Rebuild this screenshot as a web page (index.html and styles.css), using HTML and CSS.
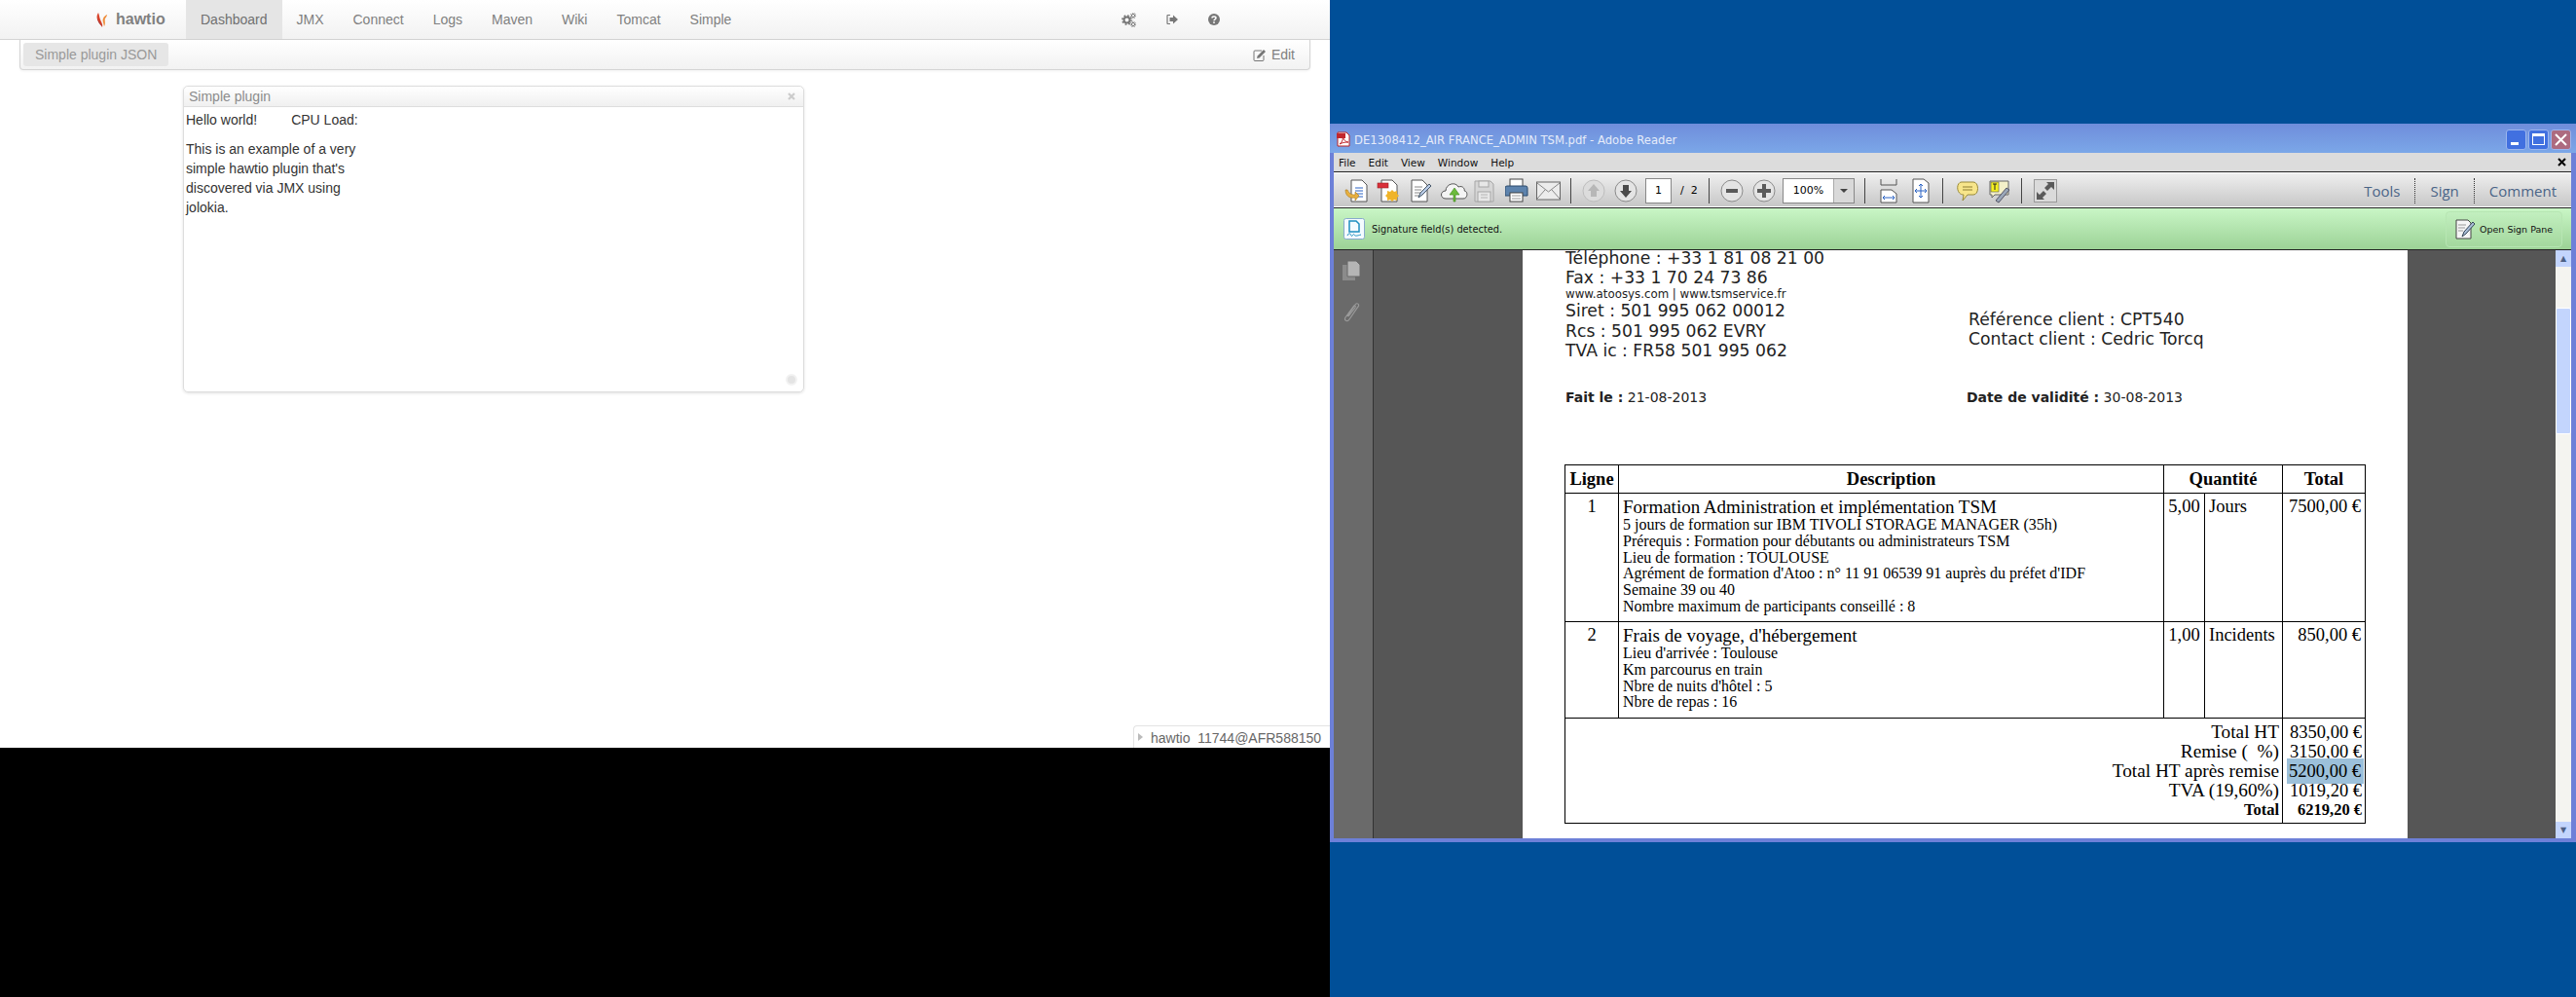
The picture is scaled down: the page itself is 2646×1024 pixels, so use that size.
FILE: index.html
```html
<!DOCTYPE html>
<html lang="en">
<head>
    <meta charset="UTF-8">
    <title>hawtio and Adobe Reader</title>
    <link rel="stylesheet" href="styles.css">
</head>
<body>
<div class="screen">
    <!-- browser with hawtio -->
    <div class="browser">
        <div class="app">
            <nav class="navbar">
                <a class="brand">
                    <svg width="12" height="15" viewBox="0 0 12 15"><path d="M2 0C0 3 0 6 2 9L6 15C7 12 5 10 4 7 3 5 3 2 2 0Z" fill="#d9442b"/><path d="M11 2C7 4 6 7 7 10L8 14C10 11 8 8 9 6 10 5 11 3 11 2Z" fill="#ef8e3c"/><path d="M1 5C1 9 3 12 6 14 5 11 2 9 1 5Z" fill="#a33"/></svg>
                    <span>hawtio</span>
                </a>
                <a class="tab active">Dashboard</a>
                <a class="tab">JMX</a>
                <a class="tab">Connect</a>
                <a class="tab">Logs</a>
                <a class="tab">Maven</a>
                <a class="tab">Wiki</a>
                <a class="tab">Tomcat</a>
                <a class="tab">Simple</a>
                <div class="nav-icons">
                    <svg width="15" height="15" viewBox="0 0 15 15" fill="none" stroke="#777"><circle cx="5.5" cy="7.5" r="3" stroke-width="2"/><circle cx="5.5" cy="7.5" r="4.6" stroke-width="1.6" stroke-dasharray="1.8 1.8"/><circle cx="12" cy="3" r="1.6"/><circle cx="12" cy="3" r="2.8" stroke-dasharray="1.2 1.2"/><circle cx="12" cy="12" r="1.6"/><circle cx="12" cy="12" r="2.8" stroke-dasharray="1.2 1.2"/></svg>
                    <svg width="12" height="12" viewBox="0 0 12 12"><path d="M4 1.5H1.5A.5.5 0 0 0 1 2v8a.5.5 0 0 0 .5.5H4" fill="none" stroke="#777" stroke-width="1.2"/><path d="M3.5 4H7V1.5L12 6 7 10.500V8H3.5Z" fill="#777"/></svg>
                    <svg width="12" height="12" viewBox="0 0 12 12"><circle cx="6" cy="6" r="6" fill="#777"/><path d="M4 4.600C4 2.600 8 2.600 8 4.600 8 6 6 5.800 6 7.300" fill="none" stroke="#fff" stroke-width="1.500"/><rect x="5.200" y="8.300" width="1.600" height="1.600" fill="#fff"/></svg>
                </div>
            </nav>
            <div class="subbar">
                <a class="sub-btn">Simple plugin JSON</a>
                <a class="edit">
                    <svg width="14" height="13" viewBox="0 0 14 13"><path d="M9 2H2a1 1 0 0 0-1 1v8.500a1 1 0 0 0 1 1h8a1 1 0 0 0 1-1V7" fill="none" stroke="#777"/><path d="M4 10l.6-2.600L11 1l2 2-6.400 6.400Z" fill="#777"/></svg>
                    Edit
                </a>
            </div>
            <section class="widget">
                <header class="widget-title">
                    <span>Simple plugin</span>
                    <svg width="8" height="8" viewBox="0 0 8 8"><path d="M1 1l6 6M7 1L1 7" stroke="#ccc" stroke-width="2.200"/></svg>
                </header>
                <div class="widget-body">
                    <div class="hello"><span>Hello world!</span><span>CPU Load:</span></div>
                    <p class="about">This is an example of a very simple hawtio plugin that's discovered via JMX using jolokia.</p>
                </div>
                <i class="resize"></i>
            </section>
            <div class="jvm-tag"><i class="caret"></i>hawtio&nbsp; 11744@AFR588150</div>
        </div>
        <div class="black"></div>
    </div>

    <!-- desktop with reader window -->
    <div class="desktop">
        <div class="window">
            <div class="titlebar">
                <svg width="16" height="16" viewBox="0 0 16 16"><path d="M2 1h9l3 3v11H2Z" fill="#fff" stroke="#b22"/><rect x="1" y="2" width="9" height="5" fill="#c1272d"/><path d="M4 13C7 11 8 7 7 5 8 8 10 11 13 11 9 11 7 11.500 4 13Z" fill="none" stroke="#c1272d"/></svg>
                <span class="win-title">DE1308412_AIR FRANCE_ADMIN TSM.pdf - Adobe Reader</span>
                <div class="win-btns">
                    <b class="win-btn"><i class="glyph-min"></i></b>
                    <b class="win-btn"><i class="glyph-max"></i></b>
                    <b class="win-btn close"><svg width="13" height="13" viewBox="0 0 13 13"><path d="M1 1l11 11M12 1L1 12" stroke="#fff" stroke-width="2"/></svg></b>
                </div>
            </div>
            <div class="menubar">
                <span>File</span><span>Edit</span><span>View</span><span>Window</span><span>Help</span>
                <svg class="menu-x" width="9" height="9" viewBox="0 0 9 9"><path d="M1 1l7 7M8 1L1 8" stroke="#000" stroke-width="2"/></svg>
            </div>
            <div class="toolbar">
                <svg width="33" height="26" viewBox="0 0 33 26"><path d="M7 2h11l5 5v17H7Z" fill="#fff" stroke="#555"/><path d="M11 10h8M11 13h8M11 16h8M13 19h6" stroke="#2b63c4"/><path d="M1 12C1 18 5 21 11 20V23L15 18 11 14V17C7 17 5 16 3 12Z" fill="#e8b040" stroke="#a97a1c" stroke-width=".6"/></svg>
                <svg width="35" height="26" viewBox="0 0 35 26"><path d="M5 2h11l5 5v17H5Z" fill="#fff" stroke="#555"/><rect x="1" y="5" width="11" height="5" fill="#d9303a" stroke="#922" stroke-width=".6"/><path d="M16 12l2 2 3-1 0 3 2 2-2 2 0 3-3-1-2 2-2-2-3 1 0-3-2-2 2-2 0-3 3 1Z" fill="#f0b429"/></svg>
                <svg width="30" height="26" viewBox="0 0 30 26"><path d="M1 2h11l5 5v17H1Z" fill="#fff" stroke="#555"/><path d="M4 9h8M4 12h7M4 15h6M4 18h5" stroke="#888"/><path d="M8 20l2-5L19 6l2 2-9 9Z" fill="#b9cbe6" stroke="#456"/></svg>
                <svg width="35" height="26" viewBox="0 0 35 26"><path d="M6 21C0 21 0 13 6 13 6 6 16 3 19 9 24 7 26 12 25 13 29 13 29 21 24 21Z" fill="#f4f4f4" stroke="#555"/><path d="M14 24V17H10L15 10 20 17H16V24Z" fill="#6cbb3c" stroke="#3f8a1c" stroke-width=".6"/></svg>
                <svg width="32" height="26" viewBox="0 0 32 26"><path d="M1 3h16l3 3v18H1Z" fill="#d6d6d6" stroke="#a5a5a5"/><rect x="5" y="3" width="10" height="6" fill="#e7e7e7" stroke="#a5a5a5"/><rect x="4" y="14" width="13" height="10" fill="#e7e7e7" stroke="#a5a5a5"/><path d="M7 17h7M7 20h7" stroke="#b5b5b5"/></svg>
                <svg width="32" height="26" viewBox="0 0 32 26"><rect x="5" y="1" width="13" height="8" fill="#fff" stroke="#444"/><path d="M2 8h19a2 2 0 0 1 2 2v8H0v-8a2 2 0 0 1 2-2Z" fill="#5d83ad" stroke="#2c4b6d"/><rect x="5" y="15" width="13" height="9" fill="#fff" stroke="#444"/><path d="M7 18h9M7 21h9" stroke="#999"/></svg>
                <svg width="35" height="26" viewBox="0 0 35 26"><rect x=".5" y="4" width="24" height="18" fill="#ececec" stroke="#666"/><path d="M1 5l11.500 9L24 5M1 21l8-9M24 21l-8-9" fill="none" stroke="#888"/></svg>
                <i class="tb-sep"></i>
                <svg width="33" height="26" viewBox="0 0 33 26"><circle cx="12" cy="13" r="11" fill="#dcdcdc" stroke="#bdbdbd"/><path d="M12 6L18 13H15V19H9V13H6Z" fill="#b7b7b7"/></svg>
                <svg width="32" height="26" viewBox="0 0 32 26"><circle cx="12" cy="13" r="11" fill="#e4e4e4" stroke="#8b8b8b"/><path d="M12 20L6 13H9V7H15V13H18Z" fill="#4a4a4a"/></svg>
                <span class="page-box">1</span>
                <span class="page-of">/&nbsp; 2</span>
                <i class="tb-sep"></i>
                <svg width="33" height="26" viewBox="0 0 33 26"><circle cx="12" cy="13" r="11" fill="#e4e4e4" stroke="#8b8b8b"/><rect x="6" y="11" width="12" height="4" fill="#5a5a5a"/></svg>
                <svg width="31" height="26" viewBox="0 0 31 26"><circle cx="12" cy="13" r="11" fill="#e4e4e4" stroke="#8b8b8b"/><path d="M10 6h4v5h5v4h-5v5h-4v-5H5v-4h5Z" fill="#5a5a5a"/></svg>
                <div class="zoom-box"><span>100%</span><i class="zoom-arrow"></i></div>
                <i class="tb-sep sep-fit"></i>
                <svg width="33" height="26" viewBox="0 0 33 26"><path d="M1 1v6h16V1" fill="none" stroke="#555"/><path d="M1 12h11l5 4v9H1Z" fill="#fff" stroke="#555"/><path d="M3 20h12M3 20l2-2M3 20l2 2M15 20l-2-2M15 20l-2 2" stroke="#2b63c4"/></svg>
                <svg width="31" height="26" viewBox="0 0 31 26"><path d="M1 1h11l5 4v20H1Z" fill="#fff" stroke="#555"/><path d="M9 6v14M3 13h12M9 6L7 8M9 6l2 2M9 20l-2-2M9 20l2-2M3 13l2-2M3 13l2 2M15 13l-2-2M15 13l-2 2" stroke="#2b63c4"/></svg>
                <i class="tb-sep sep-note"></i>
                <svg width="33" height="26" viewBox="0 0 33 26"><path d="M5 4h12c6 0 6 13 0 13h-6l-5 6 1-6C-1 17-1 4 5 4Z" fill="#f7e58a" stroke="#998a3a"/><path d="M6 9h10M6 12h10" stroke="#8e7f33"/></svg>
                <svg width="33" height="26" viewBox="0 0 33 26"><path d="M1 3h19v14H6l-3 3v-3H1Z" fill="#f4f0c9" stroke="#666"/><rect x="2" y="4" width="8" height="10" fill="#f5ef20" stroke="#555" stroke-width=".6"/><path d="M4 6h4M6 6v6" stroke="#222"/><path d="M7 23L18 10l3 2-11 13Z" fill="#9aa7b8" stroke="#556"/></svg>
                <i class="tb-sep sep-expand"></i>
                <svg width="24" height="24" viewBox="0 0 24 24"><rect x=".5" y=".5" width="23" height="23" fill="#dadada" stroke="#9a9a9a"/><path d="M13 3h8v8l-3-3-4 4-3-3 4-4ZM11 21H3v-8l3 3 4-4 3 3-4 4Z" fill="#5a5a5a"/></svg>
                <div class="panes"><span>Tools</span><span>Sign</span><span>Comment</span></div>
            </div>
            <div class="notice">
                <svg width="22" height="22" viewBox="0 0 22 22"><rect x=".5" y=".5" width="21" height="21" rx="2" fill="#f4fbff" stroke="#8ac"/><path d="M6 3h7l3 3v8H6Z" fill="none" stroke="#1e8fc0" stroke-width="1.500"/><path d="M4 18c2-4 3-2 4 0s2-3 3-1 3 1 7 0" fill="none" stroke="#1e8fc0"/></svg>
                <span class="notice-text">Signature field(s) detected.</span>
                <a class="sign-pane">
                    <svg width="21" height="21" viewBox="0 0 21 21"><path d="M1 1h12l3 3v16H1Z" fill="#f6f6f6" stroke="#444"/><path d="M3 6h8M3 9h7M3 12h5" stroke="#999"/><path d="M7 18l2-5 9-10 2 2-9 10Z" fill="#a9bdd8" stroke="#345"/></svg>
                    Open Sign Pane
                </a>
            </div>
            <div class="viewer">
                <aside class="nav-pane">
                    <svg width="20" height="22" viewBox="0 0 20 22"><rect x="1" y="5" width="13" height="16" fill="#8b8b8b"/><path d="M6 1h9l4 4v12H6Z" fill="#b5b5b5" stroke="#686868"/></svg>
                    <svg width="18" height="22" viewBox="0 0 18 22" fill="none" stroke="#9a9a9a" stroke-width="1.200"><path d="M5 15L13 3c2-3 5 0 3 2L7 18c-2 3-6 1-4-2L11 5c1-2 3-1 2 1L6 15"/></svg>
                </aside>
                <div class="doc-area">
                    <div class="page">
                        <div class="top-info">
                            <div class="company">
                                <div class="ln first">Téléphone : +33 1 81 08 21 00</div>
                                <div class="ln">Fax : +33 1 70 24 73 86</div>
                                <div class="ln web">www.atoosys.com | www.tsmservice.fr</div>
                                <div class="ln">Siret : 501 995 062 00012</div>
                                <div class="ln rcs">Rcs : 501 995 062 EVRY</div>
                                <div class="ln">TVA ic : FR58 501 995 062</div>
                            </div>
                            <div class="client">
                                <div class="ln">Référence client : CPT540</div>
                                <div class="ln">Contact client : Cedric Torcq</div>
                            </div>
                        </div>
                        <div class="dates">
                            <span class="date-l"><b>Fait le :</b> 21-08-2013</span>
                            <span><b>Date de validité :</b> 30-08-2013</span>
                        </div>
                        <table class="quote">
                            <colgroup><col class="c1"><col class="c2"><col class="c3"><col class="c4"><col class="c5"></colgroup>
                            <tr class="head"><th>Ligne</th><th>Description</th><th colspan="2">Quantité</th><th>Total</th></tr>
                            <tr class="row-a">
                                <td class="mid">1</td>
                                <td><div class="item">Formation Administration et implémentation TSM</div>
                                    <div class="sub">5 jours de formation sur IBM TIVOLI STORAGE MANAGER (35h)</div>
                                    <div class="sub">Prérequis : Formation pour débutants ou administrateurs TSM</div>
                                    <div class="sub">Lieu de formation : TOULOUSE</div>
                                    <div class="sub">Agrément de formation d'Atoo : n° 11 91 06539 91 auprès du préfet d'IDF</div>
                                    <div class="sub">Semaine 39 ou 40</div>
                                    <div class="sub">Nombre maximum de participants conseillé : 8</div></td>
                                <td class="mid">5,00</td><td>Jours</td><td class="num">7500,00 €</td>
                            </tr>
                            <tr class="row-b">
                                <td class="mid">2</td>
                                <td><div class="item">Frais de voyage, d'hébergement</div>
                                    <div class="sub">Lieu d'arrivée : Toulouse</div>
                                    <div class="sub">Km parcourus en train</div>
                                    <div class="sub">Nbre de nuits d'hôtel : 5</div>
                                    <div class="sub">Nbre de repas : 16</div></td>
                                <td class="mid">1,00</td><td>Incidents</td><td class="num">850,00 €</td>
                            </tr>
                            <tr class="row-sum">
                                <td colspan="4" class="num sum labels">
                                    <div>Total HT</div><div>Remise (&nbsp; %)</div><div>Total HT après remise</div><div>TVA (19,60%)</div><div class="grand">Total</div>
                                </td>
                                <td class="num sum">
                                    <div>8350,00 €</div><div>3150,00 €</div><div><span class="hl">5200,00 €</span></div><div>1019,20 €</div><div class="grand">6219,20 €</div>
                                </td>
                            </tr>
                        </table>
                    </div>
                </div>
                <div class="scrollbar">
                    <i class="sb-btn">▲</i>
                    <i class="sb-gap"></i>
                    <i class="sb-thumb"></i>
                    <i class="sb-rest"></i>
                    <i class="sb-btn">▼</i>
                </div>
            </div>
        </div>
    </div>
</div>
</body>
</html>
```

FILE: styles.css
```css
*{
    margin: 0;
    padding: 0;
    box-sizing: border-box;
}
body{
    width: 2646px;
    height: 1024px;
    overflow: hidden;
    background: #004f98;
    font-family: "Liberation Sans", sans-serif;
}
.screen{
    display: flex;
    height: 1024px;
}
.browser{
    width: 1366px;
    display: flex;
    flex-direction: column;
}
.app{
    position: relative;
    height: 768px;
    background: #fff;
    font-size: 14px;
    line-height: 20px;
}
.black{
    flex: 1;
    background: #000;
}

/* hawtio nav */
.navbar{
    display: flex;
    height: 41px;
    padding-left: 99px;
    background: linear-gradient(#fff, #f2f2f2);
    border-bottom: 1px solid #d4d4d4;
    color: #808080;
}
.brand{
    display: flex;
    align-items: center;
    gap: 8px;
    width: 92px;
    font-size: 16px;
    font-weight: bold;
}
.tab{
    padding: 10px 15px;
}
.tab.active{
    background: #e5e5e5;
    color: #707070;
}
.nav-icons{
    display: flex;
    align-items: center;
    gap: 31px;
    margin-left: auto;
    margin-right: 113px;
}
.subbar{
    display: flex;
    justify-content: space-between;
    align-items: center;
    height: 31px;
    margin: 0 20px;
    padding: 0 15px 0 4px;
    background: linear-gradient(#fff, #f2f2f2);
    border: 1px solid #d4d4d4;
    border-top: 0;
    border-radius: 0 0 4px 4px;
    box-shadow: 0 1px 3px rgba(0,0,0,.06);
    color: #808080;
}
.sub-btn{
    padding: 2px 12px;
    background: #e6e6e6;
    border-radius: 3px;
    color: #999;
    line-height: 20px;
    margin-left: -1px;
}
.edit{
    display: flex;
    align-items: center;
    gap: 5px;
}

/* widget */
.widget{
    position: relative;
    display: flex;
    flex-direction: column;
    width: 638px;
    height: 315px;
    margin: 16px 0 0 188px;
    border: 1px solid #ddd;
    border-radius: 5px;
    box-shadow: 0 1px 3px rgba(0,0,0,.12);
}
.widget-title{
    display: flex;
    justify-content: space-between;
    align-items: center;
    height: 21px;
    padding: 0 8px 0 5px;
    background: linear-gradient(#fff, #f0f0f0);
    border-bottom: 1px solid #ddd;
    border-radius: 5px 5px 0 0;
    color: #8c8c8c;
}
.widget-body{
    padding: 3px 0 0 2px;
    color: #333;
}
.hello{
    display: flex;
    gap: 35px;
}
.about{
    width: 180px;
    margin-top: 10px;
}
.resize{
    position: absolute;
    right: 6px;
    bottom: 6px;
    width: 12px;
    height: 12px;
    background: #e4e4e4;
    border: 2px solid #f2f2f2;
    border-radius: 50%;
}
.jvm-tag{
    position: absolute;
    right: 0;
    bottom: 0;
    width: 202px;
    height: 23px;
    padding: 2px 0 0 17px;
    background: #fff;
    border: 1px solid #e3e3e3;
    border-width: 1px 0 0 1px;
    border-radius: 4px 0 0 0;
    color: #666;
}
.caret{
    position: absolute;
    left: 4px;
    top: 7px;
    border-left: 5px solid #bbb;
    border-top: 4px solid transparent;
    border-bottom: 4px solid transparent;
}

/* reader window */
.desktop{
    flex: 1;
    padding-top: 127px;
}
.window{
    display: flex;
    flex-direction: column;
    height: 738px;
    padding: 0 5px 4px 4px;
    background: #6d80d8;
    box-shadow: inset 0 1px 0 #2a62b8;
    font-family: "DejaVu Sans", sans-serif;
}
.titlebar{
    display: flex;
    align-items: center;
    height: 30px;
    margin: 0 -5px 0 -4px;
    padding: 2px 5px 0 6px;
    background: linear-gradient(#6f8ddb, #7ba7e8);
    color: #e6ecfa;
}
.win-title{
    margin-left: 3px;
    padding-top: 2px;
    font-size: 11.600px;
}
.win-btns{
    display: flex;
    gap: 2px;
    margin-left: auto;
}
.win-btn{
    display: flex;
    align-items: center;
    justify-content: center;
    width: 21px;
    height: 21px;
    background: #4170e0;
    border: 1px solid #9cb6ee;
    border-radius: 3px;
}
.win-btn.close{
    background: #ad6b80;
}
.glyph-min{
    width: 8px;
    height: 3px;
    margin-top: 9px;
    margin-right: 4px;
    background: #fff;
}
.glyph-max{
    width: 13px;
    height: 12px;
    border: 1px solid #fff;
    border-top-width: 3px;
}
.menubar{
    display: flex;
    align-items: center;
    gap: 13px;
    height: 19px;
    padding-left: 5px;
    background: #dcdcdc;
    color: #111;
    font-size: 10.500px;
}
.menu-x{
    margin-left: auto;
    margin-right: 5px;
}
.toolbar{
    display: flex;
    align-items: center;
    height: 38px;
    padding: 1px 0 0 11px;
    background: linear-gradient(#f0f0f0, #c6c6c6);
    border-top: 1px solid #222;
    border-bottom: 1px solid #222;
    box-shadow: inset 0 -1px 0 #fff, inset 0 1px 0 #fff;
}
.toolbar svg{
    flex: none;
}
.tb-sep{
    flex: none;
    width: 1px;
    height: 26px;
    margin-right: 11px;
    background: #444;
}
.sep-fit{
    margin-left: 10px;
    margin-right: 15px;
}
.sep-note{
    margin-right: 14px;
}
.sep-expand{
    margin-right: 12px;
}
.page-box{
    width: 27px;
    height: 26px;
    margin-right: 9px;
    background: #fff;
    border: 1px solid #888;
    font-size: 11px;
    line-height: 24px;
    text-align: center;
}
.page-of{
    width: 29px;
    font-size: 11px;
}
.zoom-box{
    display: flex;
    width: 74px;
    height: 26px;
    background: #fff;
    border: 1px solid #888;
    font-size: 11px;
    line-height: 24px;
}
.zoom-box span{
    width: 51px;
    text-align: center;
}
.zoom-arrow{
    position: relative;
    flex: 1;
    background: #d9d9d9;
    border-left: 1px solid #aaa;
}
.zoom-arrow::after{
    content: "";
    position: absolute;
    left: 6px;
    top: 10px;
    border-top: 4px solid #444;
    border-left: 4px solid transparent;
    border-right: 4px solid transparent;
}
.panes{
    display: flex;
    margin-left: auto;
    font-family: "Open Sans", sans-serif;
    font-size: 15px;
    color: #4a6487;
}
.panes span{
    padding: 0 15px;
    line-height: 26px;
    border-left: 1px dotted #333;
}
.panes span:first-child{
    border-left: 0;
}
.notice{
    display: flex;
    align-items: center;
    height: 43px;
    padding-left: 10px;
    background: linear-gradient(#c9f6c6, #9cd296);
    border-bottom: 1px solid #222;
    color: #111;
    font-size: 9.800px;
}
.notice-text{
    margin-left: 7px;
}
.sign-pane{
    display: flex;
    align-items: center;
    gap: 4px;
    width: 120px;
    height: 37px;
    margin-left: auto;
    margin-right: 9px;
    padding-left: 9px;
    background: linear-gradient(#c2efbf, #a4d89e);
    border: 1px solid #b7e6b3;
    border-radius: 4px;
    font-size: 9.500px;
}
.viewer{
    flex: 1;
    display: flex;
    min-height: 0;
}
.nav-pane{
    display: flex;
    flex-direction: column;
    align-items: center;
    gap: 21px;
    width: 41px;
    padding: 10px 4px 0 0;
    background: #6a6a6a;
    border-right: 1px solid #333;
}
.doc-area{
    flex: 1;
    min-width: 0;
    padding: 0 152px 0 153px;
    background: #565656;
}
.page{
    height: 100%;
    padding: 0 42px 0 44px;
    background: #fff;
    color: #222;
}
.top-info{
    display: flex;
    font-size: 17.200px;
}
.company{
    width: 414px;
}
.ln{
    height: 20px;
    line-height: 20px;
}
.ln.first{
    height: 18px;
    line-height: 16px;
}
.web{
    height: 14px;
    line-height: 14px;
    font-size: 11.800px;
}
.rcs{
    height: 21px;
    line-height: 22px;
}
.client{
    padding-top: 61px;
}
.dates{
    display: flex;
    height: 16px;
    margin-top: 30px;
    font-size: 14px;
    line-height: 16px;
}
.date-l{
    width: 412px;
}
.quote{
    width: 822px;
    margin: 61px 0 0 -1px;
    border-collapse: collapse;
    table-layout: fixed;
    font-family: "Liberation Serif", serif;
    font-size: 18.500px;
    color: #000;
}
.c1{ width: 55px; }
.c2{ width: 560px; }
.c3{ width: 42px; }
.c4{ width: 80px; }
.c5{ width: 85px; }
.quote th, .quote td{
    border: 1px solid #000;
    padding: 0 4px;
    vertical-align: top;
}
.quote th{
    vertical-align: middle;
}
.head{ height: 29px; }
.row-a{ height: 132px; }
.row-b{ height: 99px; }
.row-sum{ height: 108px; }
.row-a td, .row-b td{
    padding-top: 5px;
    line-height: 17px;
}
.mid{
    text-align: center;
}
.num{
    text-align: right;
}
.item{
    height: 19px;
    font-size: 19px;
}
.sub{
    height: 16.800px;
    font-size: 16px;
    line-height: 16.800px;
}
.quote td.sum{
    padding: 4px 3px 0 4px;
    line-height: 20px;
}
.quote td.labels{
    font-size: 19.300px;
}
.grand{
    font-size: 16.500px;
    font-weight: bold;
}
.hl{
    display: inline-block;
    width: 79px;
    padding-right: 3px;
    margin: -3px 0;
    background: #9cc0da;
    line-height: 26px;
    vertical-align: top;
}

/* scrollbar */
.scrollbar{
    display: flex;
    flex-direction: column;
    flex: none;
    width: 16px;
    background: #f4f4f0;
}
.sb-btn{
    flex: none;
    height: 17px;
    background: #c3d5fd;
    color: #4d6185;
    font-size: 8px;
    font-style: normal;
    line-height: 17px;
    text-align: center;
}
.sb-gap{
    flex: none;
    height: 42px;
}
.sb-thumb{
    flex: none;
    height: 130px;
    background: #c3d5fd;
    border: 1px solid #fff;
    border-radius: 2px;
}
.sb-rest{
    flex: 1;
}
```
